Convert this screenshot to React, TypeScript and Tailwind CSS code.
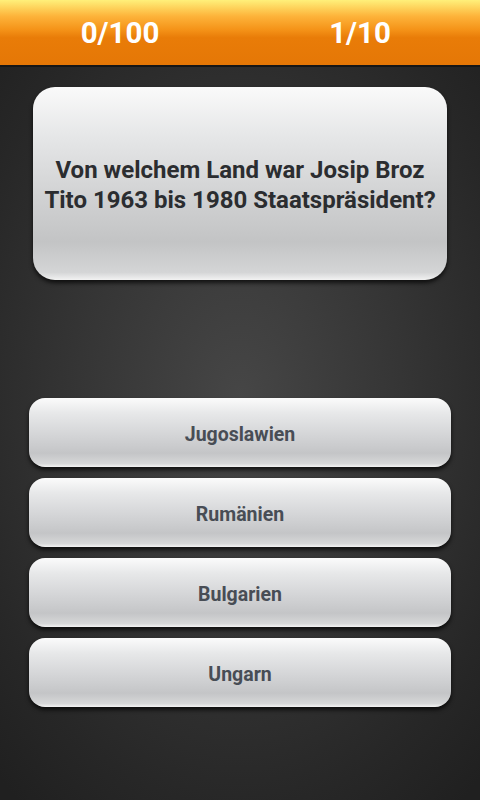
import React from "react";

const answers = ["Jugoslawien", "Rumänien", "Bulgarien", "Ungarn"];

export default function App() {
  return (
    <div
      className="w-[480px] h-[800px] overflow-hidden flex flex-col"
      style={{ fontFamily: "Roboto, 'Noto Sans', sans-serif" }}
    >
      <div className="h-[65px] shrink-0 flex items-center bg-[linear-gradient(to_bottom,#fff07a_0%,#fdb33a_25%,#f59419_45%,#e97c08_58%,#e57706_100%)]">
        <div className="w-1/2 flex justify-center pt-[3px]">
          <span className="text-white font-bold text-[29.5px] leading-none">0/100</span>
        </div>
        <div className="w-1/2 flex justify-center pt-[3px]">
          <span className="text-white font-bold text-[29.5px] leading-none">1/10</span>
        </div>
      </div>
      <div className="flex-1 flex flex-col border-t-[2px] border-[#161616] bg-[radial-gradient(ellipse_75%_70%_at_50%_45%,#464646_0%,#353535_45%,#272727_80%,#202020_100%)]">
        <div className="mt-[20px] mx-[33px] h-[193px] rounded-[22px] bg-[linear-gradient(to_bottom,#fafafa_0%,#e6e7e8_25%,#d2d3d4_55%,#c3c4c5_80%,#d4d5d6_96%,#f2f2f2_100%)] shadow-[0_3px_4px_rgba(0,0,0,0.7)] flex items-center justify-center px-1">
          <p className="text-center text-[#2b2d30] font-bold text-[24px] leading-[30px] pt-[2px] whitespace-nowrap">
            Von welchem Land war Josip Broz
            <br />
            Tito 1963 bis 1980 Staatspräsident?
          </p>
        </div>
        <div className="mt-[118px] mx-[29px] flex flex-col gap-[11px]">
          {answers.map((a) => (
            <div
              key={a}
              className="h-[69px] rounded-[16px] bg-[linear-gradient(to_bottom,#fbfbfb_0%,#e7e8e9_22%,#d3d4d6_55%,#c4c5c7_80%,#d6d7d8_95%,#f4f4f4_100%)] shadow-[0_3px_4px_rgba(0,0,0,0.7)] flex items-center justify-center"
            >
              <span className="text-[#484d55] font-bold text-[19.5px] pt-[5px]">{a}</span>
            </div>
          ))}
        </div>
      </div>
    </div>
  );
}
